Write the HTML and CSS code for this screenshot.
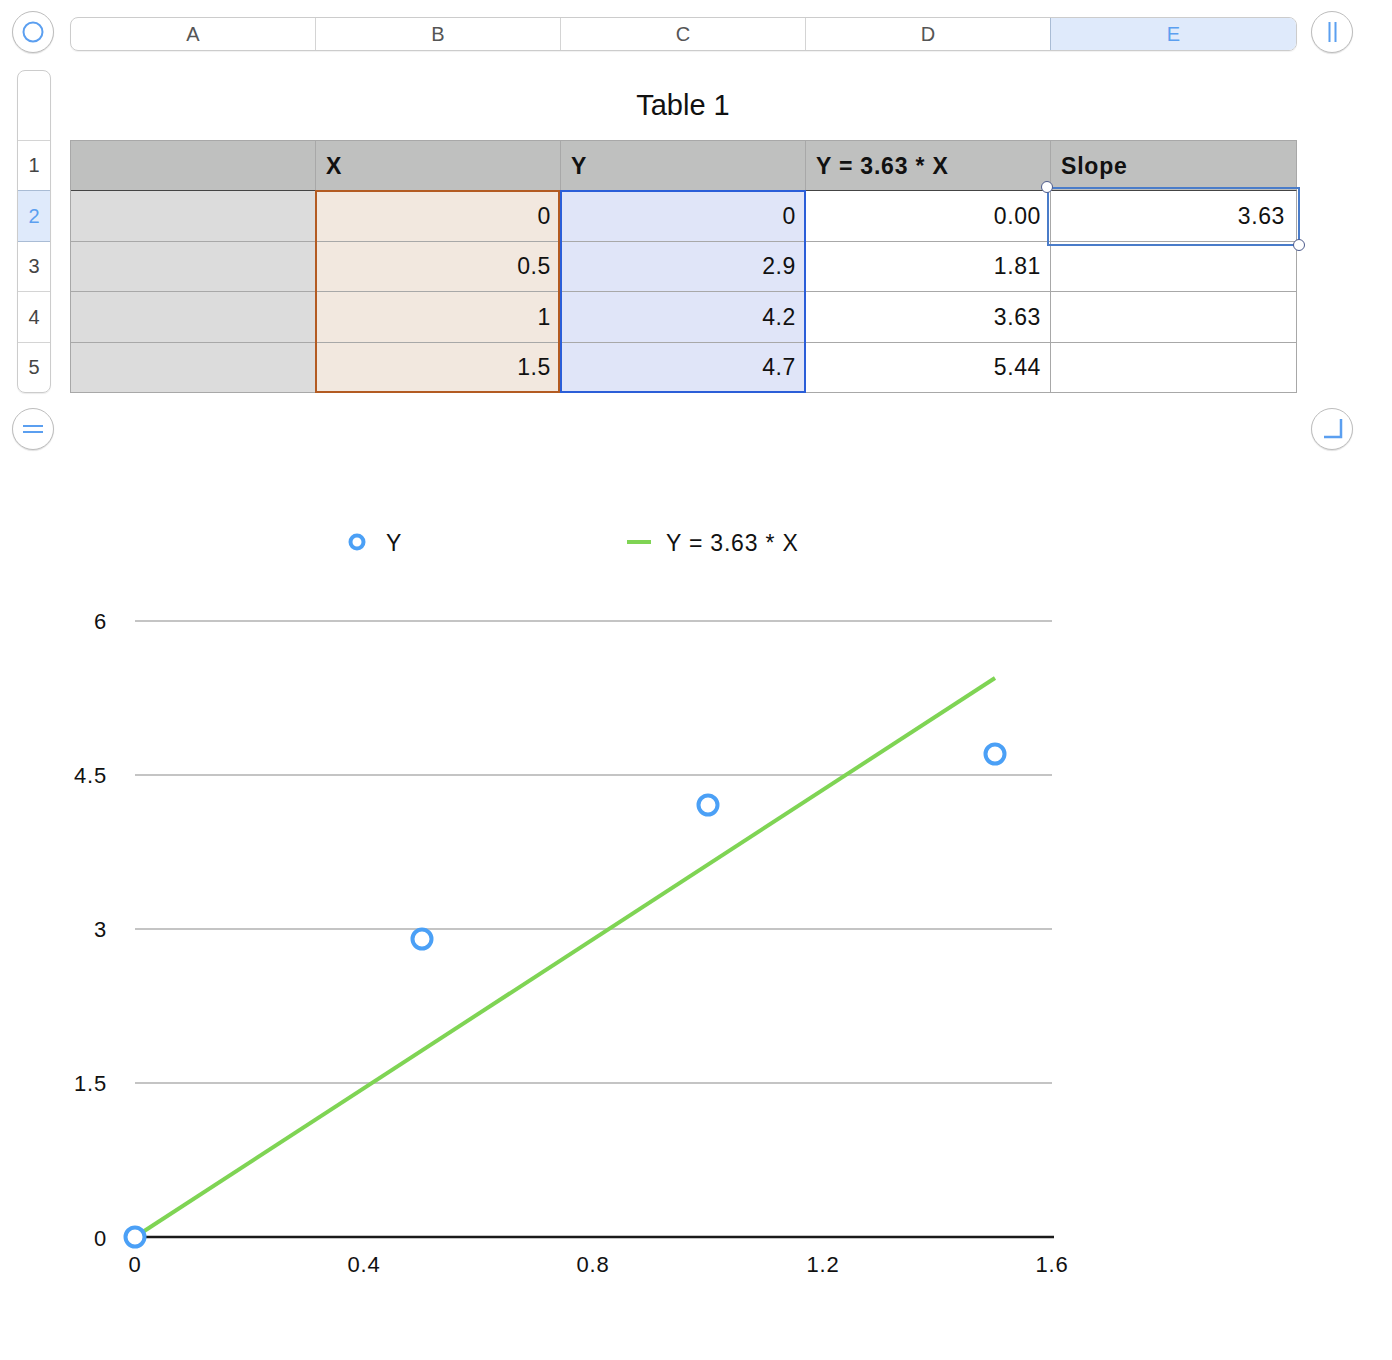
FILE: index.html
```html
<!DOCTYPE html>
<html>
<head>
<meta charset="utf-8">
<link rel="stylesheet" href="styles.css">
</head>
<body>
<div class="sheet">
  <div class="top">
    <div class="knob"><svg width="40" height="40" viewBox="0 0 40 40"><circle cx="20" cy="20" r="9.5" fill="none" stroke="#5b9ff0" stroke-width="2"/></svg></div>
    <div class="colbar">
      <div class="colh">A</div>
      <div class="colh">B</div>
      <div class="colh">C</div>
      <div class="colh">D</div>
      <div class="colh sel">E</div>
    </div>
    <div class="knob"><svg width="40" height="40" viewBox="0 0 40 40"><path d="M17.5 10v20M23.5 10v20" stroke="#5b9ff0" stroke-width="2" fill="none"/></svg></div>
  </div>

  <div class="mid">
    <div class="rowbar">
      <div class="rowh corner"></div>
      <div class="rowh r50">1</div>
      <div class="rowh r51 sel">2</div>
      <div class="rowh r50">3</div>
      <div class="rowh r51">4</div>
      <div class="rowh last">5</div>
    </div>
    <div class="tablewrap">
      <div class="title">Table 1</div>
      <div class="grid">
        <div class="cell head"></div>
        <div class="cell head">X</div>
        <div class="cell head">Y</div>
        <div class="cell head">Y = 3.63 * X</div>
        <div class="cell head">Slope</div>

        <div class="cell cola"></div>
        <div class="cell colb">0</div>
        <div class="cell colc">0</div>
        <div class="cell">0.00</div>
        <div class="cell selcell">3.63</div>

        <div class="cell cola"></div>
        <div class="cell colb">0.5</div>
        <div class="cell colc">2.9</div>
        <div class="cell">1.81</div>
        <div class="cell"></div>

        <div class="cell cola"></div>
        <div class="cell colb">1</div>
        <div class="cell colc">4.2</div>
        <div class="cell">3.63</div>
        <div class="cell"></div>

        <div class="cell cola"></div>
        <div class="cell colb">1.5</div>
        <div class="cell colc">4.7</div>
        <div class="cell">5.44</div>
        <div class="cell"></div>

        <div class="range rx"></div>
        <div class="range ry"></div>
        <div class="selbox"></div>
        <div class="hdl h1"></div>
        <div class="hdl h2"></div>
      </div>
    </div>
  </div>

  <div class="bottom">
    <div class="knob"><svg width="40" height="40" viewBox="0 0 40 40"><path d="M10 17h20M10 23h20" stroke="#5b9ff0" stroke-width="2" fill="none"/></svg></div>
    <div class="knob"><svg width="40" height="40" viewBox="0 0 40 40"><path d="M29 10v18H12" stroke="#5b9ff0" stroke-width="2.5" fill="none"/></svg></div>
  </div>

  <svg class="chart" width="1392" height="910" viewBox="0 450 1392 910">
    <g class="legend">
      <circle cx="357" cy="542" r="6.5" fill="#fff" stroke="#4ba0f6" stroke-width="4"/>
      <text x="386" y="551">Y</text>
      <line x1="627" y1="542" x2="651" y2="542" stroke="#7fd454" stroke-width="4"/>
      <text x="666" y="551">Y = 3.63 * X</text>
    </g>
    <g stroke="#c4c4c4" stroke-width="2">
      <line x1="135" y1="621" x2="1052" y2="621"/>
      <line x1="135" y1="775" x2="1052" y2="775"/>
      <line x1="135" y1="929" x2="1052" y2="929"/>
      <line x1="135" y1="1083" x2="1052" y2="1083"/>
    </g>
    <line x1="135" y1="1237" x2="1054" y2="1237" stroke="#1a1a1a" stroke-width="2.5"/>
    <g class="ylab">
      <text x="107" y="629">6</text>
      <text x="107" y="783">4.5</text>
      <text x="107" y="937">3</text>
      <text x="107" y="1091">1.5</text>
      <text x="107" y="1246">0</text>
    </g>
    <g class="xlab">
      <text x="135" y="1272">0</text>
      <text x="364" y="1272">0.4</text>
      <text x="593" y="1272">0.8</text>
      <text x="823" y="1272">1.2</text>
      <text x="1052" y="1272">1.6</text>
    </g>
    <line x1="135" y1="1237" x2="995" y2="678" stroke="#7fd454" stroke-width="4"/>
    <g fill="#fff" stroke="#4ba0f6" stroke-width="4">
      <circle cx="135" cy="1237" r="9.5"/>
      <circle cx="422" cy="939" r="9.5"/>
      <circle cx="708" cy="805" r="9.5"/>
      <circle cx="995" cy="754" r="9.5"/>
    </g>
  </svg>
</div>
</body>
</html>
```

FILE: styles.css
```css
* { box-sizing: border-box; }
html, body { margin: 0; padding: 0; background: #fff; }
body { font-family: "Liberation Sans", Arial, sans-serif; color: #111; width: 1392px; height: 1360px; overflow: hidden; }

.top { display: flex; align-items: flex-start; padding: 11px 0 0 12px; height: 53px; }
.knob { width: 42px; height: 42px; border-radius: 50%; border: 1px solid #bdbdbd; background: #fff; box-shadow: 0 1px 1px rgba(0,0,0,0.12); display: flex; align-items: center; justify-content: center; flex: none; }
.knob svg { display: block; }
.colbar { margin: 6px 14px 0 16px; width: 1227px; height: 34px; border: 1px solid #cccccc; border-radius: 8px; display: grid; grid-template-columns: 245px 245px 245px 245px 1fr; overflow: hidden; box-shadow: 0 1px 1px rgba(0,0,0,0.06); }
.colh { border-right: 1px solid #d4d4d4; display: flex; align-items: center; justify-content: center; font-size: 20px; color: #555; }
.colh.sel { background: #dfeafb; color: #5b9ff0; border-right: none; border-left: 1px solid #a9bcd5; margin-left: -1px; }

.mid { display: flex; margin-top: 17px; }
.rowbar { margin-left: 17px; width: 34px; height: 323px; border: 1px solid #cccccc; border-radius: 8px; overflow: hidden; display: flex; flex-direction: column; box-shadow: 0 1px 1px rgba(0,0,0,0.08); }
.rowh { border-bottom: 1px solid #d4d4d4; display: flex; align-items: center; justify-content: center; font-size: 20px; color: #444; flex: none; }
.rowh.corner { height: 70px; }
.rowh.r50 { height: 50px; }
.rowh.r51 { height: 51px; }
.rowh.last { height: 49px; border-bottom: none; }
.rowh.sel { background: #dfeafb; color: #5b9ff0; border-top: 1px solid #a9bcd5; border-bottom: 1px solid #a9bcd5; margin-top: -1px; height: 52px; }

.tablewrap { margin-left: 19px; }
.title { height: 70px; line-height: 70px; text-align: center; font-size: 29px; color: #111; padding-right: 1px; }
.grid { position: relative; display: grid; grid-template-columns: 245px 245px 245px 245px 246px; grid-template-rows: 50px 51px 50px 51px 50px; border-top: 1px solid #a8a8a8; border-left: 1px solid #a8a8a8; width: 1227px; }
.cell { border-right: 1px solid #a8a8a8; border-bottom: 1px solid #a8a8a8; display: flex; align-items: center; justify-content: flex-end; padding: 0 9px 0 10px; font-size: 23px; letter-spacing: 0.6px; color: #111; background: #fff; }
.cell.head { background: #bfc0bf; border-bottom-color: #444; justify-content: flex-start; font-weight: bold; padding-top: 2px; letter-spacing: 0.8px; }
.cell.selcell { padding-right: 11px; }
.cell.cola { background: #dcdcdc; }
.cell.colb { background: #f2e8df; }
.cell.colc { background: #e0e5f8; }

.range { position: absolute; top: 49px; height: 203px; border: 2px solid; }
.rx { left: 244px; width: 245px; border-color: #b35b22; }
.ry { left: 489px; width: 246px; border-color: #2b5ed8; }
.selbox { position: absolute; left: 976px; top: 46px; width: 253px; height: 59px; border: 2px solid #4a7cc9; }
.hdl { position: absolute; width: 12px; height: 12px; border-radius: 50%; background: #fff; border: 1.5px solid #4d5b8c; }
.h1 { left: 970px; top: 40px; }
.h2 { left: 1222px; top: 98px; }

.bottom { display: flex; justify-content: space-between; padding: 0 39px 0 12px; margin-top: 15px; }

.chart { display: block; }
.chart text { font-family: "Liberation Sans", Arial, sans-serif; font-size: 22px; fill: #111; letter-spacing: 0.8px; }
.legend text { font-size: 23px; letter-spacing: 0.8px; }
.ylab text { text-anchor: end; }
.xlab text { text-anchor: middle; }
```
